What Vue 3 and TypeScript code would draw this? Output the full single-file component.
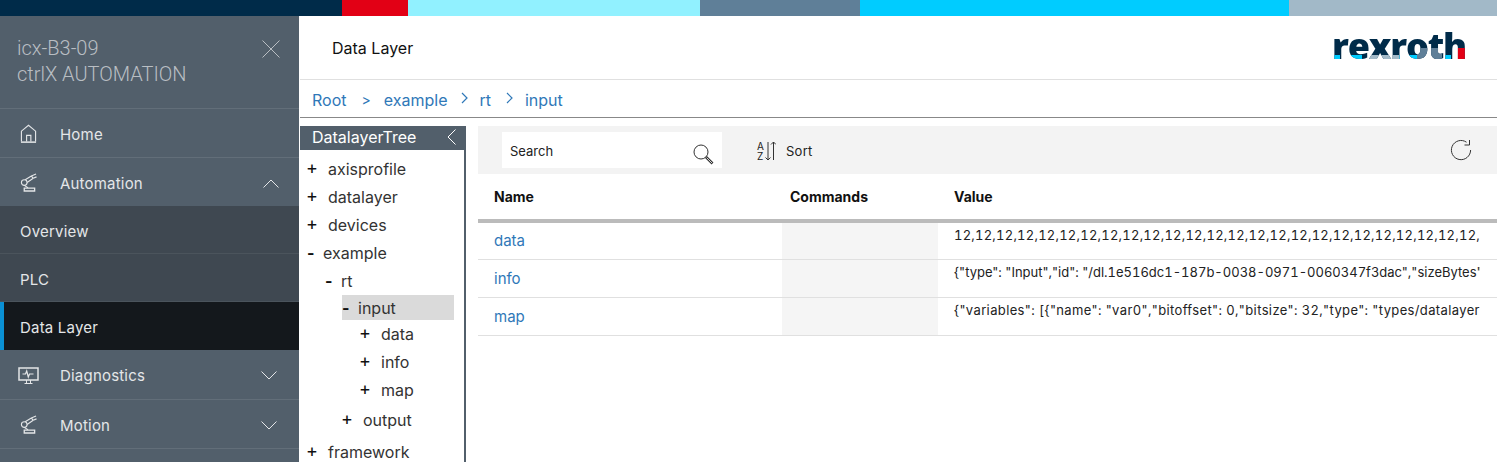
<template>
  <div class="app">
    <div class="brand-bar">
      <span v-for="seg in brandSegments" :key="seg.color" :style="{ width: seg.width + 'px', background: seg.color }"></span>
    </div>

    <div class="shell">
      <aside class="sidebar">
        <header class="sidebar__head">
          <div class="sidebar__title">icx-B3-09<br />ctrlX AUTOMATION</div>
          <svg class="sidebar__close" viewBox="0 0 18 18" fill="none" stroke="currentColor" stroke-width="1">
            <path d="M0.5 0.5l17 17M17.5 0.5l-17 17"></path>
          </svg>
        </header>

        <nav class="nav">
          <a class="nav__item">
            <svg class="nav__icon" viewBox="0 0 18 20" fill="none" stroke="currentColor" stroke-width="1.200">
              <path d="M1.500 18V7L9 0.800 16.500 7V18"></path>
              <path d="M7 18v-6.500h4.500V18"></path>
              <path d="M1 18.600h16" stroke-width="1.600"></path>
            </svg>
            <span>Home</span>
          </a>
          <a class="nav__item nav__item--open">
            <svg class="nav__icon" viewBox="0 0 18 20" fill="none" stroke="currentColor" stroke-width="1.200">
              <circle cx="4.500" cy="9.500" r="3"></circle>
              <path d="M5.500 6.500L12 2.500M7.500 9.500L14 5M12 2.500l2 2.500"></path>
              <path d="M12 2.500L17 0.500M14 5l3.500-1.500"></path>
              <path d="M4.500 12.500l4 2.500"></path>
              <path d="M4.500 15.500h11v3h-11z" stroke-width="1.400"></path>
            </svg>
            <span>Automation</span>
            <svg class="nav__chev nav__chev--up" viewBox="0 0 16 9" fill="none" stroke="currentColor">
              <path d="M0.500 8.500L8 1l7.500 7.500"></path>
            </svg>
          </a>

          <a class="nav__sub">Overview</a>
          <a class="nav__sub">PLC</a>
          <a class="nav__sub nav__sub--active">Data Layer</a>

          <a class="nav__item nav__item--diag">
            <svg class="nav__icon nav__icon--wide" viewBox="0 0 21 18" fill="none" stroke="currentColor">
              <path d="M1 1h19v12H1z" stroke-width="1.500"></path>
              <path d="M4.500 7h3l1.200-3 1.600 6 1.200-3h4" stroke-width="1.200"></path>
              <path d="M8.500 13v3M12.500 13v3M6.500 16.500h8"></path>
            </svg>
            <span>Diagnostics</span>
            <svg class="nav__chev" viewBox="0 0 16 9" fill="none" stroke="currentColor">
              <path d="M0.500 0.500L8 8l7.500-7.500"></path>
            </svg>
          </a>
          <a class="nav__item">
            <svg class="nav__icon" viewBox="0 0 18 20" fill="none" stroke="currentColor" stroke-width="1.200">
              <circle cx="4.500" cy="9.500" r="3"></circle>
              <path d="M5.500 6.500L12 2.500M7.500 9.500L14 5M12 2.500l2 2.500"></path>
              <path d="M12 2.500L17 0.500M14 5l3.500-1.500"></path>
              <path d="M4.500 12.500l4 2.500"></path>
              <path d="M4.500 15.500h11v3h-11z" stroke-width="1.400"></path>
            </svg>
            <span>Motion</span>
            <svg class="nav__chev" viewBox="0 0 16 9" fill="none" stroke="currentColor">
              <path d="M0.500 0.500L8 8l7.500-7.500"></path>
            </svg>
          </a>
        </nav>
      </aside>

      <main class="main">
        <header class="topbar">
          <h1 class="topbar__title">Data Layer</h1>
          <div class="logo">rexroth</div>
        </header>

        <div class="crumbs">
          <a>Root</a>
          <span class="crumbs__gt">&gt;</span>
          <a>example</a>
          <svg class="crumbs__sep crumbs__sep--first" viewBox="0 0 7 12" fill="none" stroke="currentColor" stroke-width="1.200"><path d="M1 1l5 5-5 5"></path></svg>
          <a>rt</a>
          <svg class="crumbs__sep crumbs__sep--second" viewBox="0 0 7 12" fill="none" stroke="currentColor" stroke-width="1.200"><path d="M1 1l5 5-5 5"></path></svg>
          <a>input</a>
        </div>

        <div class="content">
          <section class="tree">
            <div class="tree__head">
              <span>DatalayerTree</span>
              <svg viewBox="0 0 9 16" fill="none" stroke="currentColor"><path d="M8.500 0.500L1 8l7.500 7.500"></path></svg>
            </div>
            <ul class="tree__list">
              <li
                v-for="node in treeNodes"
                :key="node.label"
                class="tree__row"
                :class="[node.cls, { 'tree__row--open': node.open }]"
              >
                <span class="tree__mark">{{ node.open ? '-' : '+' }}</span>
                <span>{{ node.label }}</span>
              </li>
            </ul>
          </section>

          <section class="panel">
            <div class="toolbar">
              <div class="search">
                <span>Search</span>
                <svg viewBox="0 0 21 21" fill="none" stroke="#333">
                  <circle cx="8" cy="8" r="7"></circle>
                  <path d="M13 13l6.500 6.500" stroke-width="2.600"></path>
                  <path d="M13.600 13.600l5.400 5.400" stroke="#fff" stroke-width="0.800"></path>
                </svg>
              </div>
              <div class="sort">
                <span class="sort__az">A<br />Z</span>
                <svg viewBox="0 0 11 20" fill="none" stroke="#333"><path d="M3 1v18M0.500 16.500L3 19l2.500-2.500M8.500 19V1M6 3.500L8.500 1 11 3.500"></path></svg>
                <span class="sort__label">Sort</span>
              </div>
              <svg class="refresh" viewBox="0 0 22 22" fill="none" stroke="#333">
                <path d="M16.500 3.200A9.600 9.600 0 1 0 20.600 11"></path>
                <path d="M19.500 1v5h-5"></path>
              </svg>
            </div>

            <div class="table">
              <div class="table__row table__row--head">
                <div class="cell cell--name">Name</div>
                <div class="cell cell--cmd">Commands</div>
                <div class="cell cell--value">Value</div>
              </div>
              <div v-for="row in rows" :key="row.name" class="table__row">
                <div class="cell cell--name"><a>{{ row.name }}</a></div>
                <div class="cell cell--cmd"></div>
                <div class="cell cell--value" :class="'value-' + row.name">{{ row.value }}</div>
              </div>
            </div>
          </section>
        </div>
      </main>
    </div>
  </div>
</template>

<script setup lang="ts">
const brandSegments = [
  { width: 342, color: '#002b49' },
  { width: 66, color: '#e20015' },
  { width: 292, color: '#91f1ff' },
  { width: 160, color: '#5f7f98' },
  { width: 429, color: '#00ccff' },
  { width: 208, color: '#a2b9c8' },
];

const treeNodes = [
  { label: 'axisprofile', cls: 'd0', open: false },
  { label: 'datalayer', cls: 'd0', open: false },
  { label: 'devices', cls: 'd0', open: false },
  { label: 'example', cls: 'd0', open: true },
  { label: 'rt', cls: 'd1', open: true },
  { label: 'input', cls: 'd2 selected', open: true },
  { label: 'data', cls: 'd3', open: false },
  { label: 'info', cls: 'd3', open: false },
  { label: 'map', cls: 'd3', open: false },
  { label: 'output', cls: 'd2 gap', open: false },
  { label: 'framework', cls: 'd0 gap', open: false },
];

// values run past the column in the real table and are clipped there
const rows = [
  { name: 'data', value: '12,'.repeat(25) },
  {
    name: 'info',
    value: '{"type": "Input","id": "/dl.1e516dc1-187b-0038-0971-0060347f3dac","sizeBytes"',
  },
  {
    name: 'map',
    value: '{"variables": [{"name": "var0","bitoffset": 0,"bitsize": 32,"type": "types/datalayer',
  },
];
</script>

<style>
html,
body {
  margin: 0;
  height: 100%;
  overflow: hidden;
  background: #fff;
}
</style>

<style scoped>
.app {
  height: 462px;
  overflow: hidden;
  font-family: Inter, Roboto, "Liberation Sans", sans-serif;
  color: #222;
}

.brand-bar {
  display: flex;
  height: 16px;
}

.shell {
  display: flex;
  height: 446px;
}

.sidebar {
  flex: 0 0 299px;
  margin-right: 1px;
  background: #525f6b;
  color: #e4e6e8;
}

.sidebar__head {
  display: flex;
  justify-content: space-between;
  height: 93px;
  box-sizing: border-box;
  padding: 19px 19px 0 17px;
  border-bottom: 1px solid #626e79;
  color: #b9bec3;
}

.sidebar__title {
  font-family: Roboto, sans-serif;
  font-size: 20px;
  font-weight: 300;
  line-height: 26px;
}

.sidebar__close {
  width: 18px;
  height: 18px;
  margin-top: 5px;
}

.nav__item {
  display: flex;
  align-items: center;
  height: 49px;
  box-sizing: border-box;
  padding: 2px 22px 0 20px;
  border-bottom: 1px solid #626e79;
  font-size: 15px;
  letter-spacing: 0.2px;
}

.nav__item--open {
  height: 48px;
  border-bottom: 0;
}

.nav__item--diag {
  height: 50px;
}

.nav__item span {
  flex: 1;
}

.nav__icon {
  width: 17px;
  height: 20px;
  margin-right: 23px;
}

.nav__icon--wide {
  width: 21px;
  height: 18px;
  margin-left: -2px;
  margin-right: 21px;
}

.nav__chev {
  width: 16px;
  height: 9px;
}

.nav__chev--up {
  margin-right: -2px;
}

.nav__sub {
  display: flex;
  align-items: center;
  height: 48px;
  box-sizing: border-box;
  padding: 3px 0 0 20px;
  background: #3f4851;
  border-bottom: 1px solid #4b545c;
  font-size: 15px;
  letter-spacing: 0.2px;
}

.nav__sub--active {
  background: #14181c;
  border-bottom: 0;
  border-left: 4px solid #0a90d4;
  padding: 2px 0 0 16px;
}

.main {
  flex: 1;
  min-width: 0;
  display: flex;
  flex-direction: column;
}

.topbar {
  display: flex;
  align-items: center;
  justify-content: space-between;
  height: 64px;
  box-sizing: border-box;
  padding: 1px 31px 0 32px;
  border-bottom: 1px solid #e0e0e0;
}

.topbar__title {
  margin: 0;
  font-size: 16px;
  font-weight: 400;
  color: #111;
}

.logo {
  position: relative;
  top: -2px;
  font-family: "Open Sans", sans-serif;
  font-size: 36px;
  font-weight: 800;
  line-height: 36px;
  letter-spacing: -1.2px;
  color: transparent;
  background:
    linear-gradient(90deg, #00ccff 0 8px, transparent 8px 15px, #00ccff 15px 30px, transparent 30px 35px, #a2b9c8 35px 67px, #00ccff 67px 85px, transparent 85px 112px, #00ccff 112px 119px, transparent 119px) left 0 top 27px / 100% 9px no-repeat,
    linear-gradient(90deg, transparent 0 85px, #5f7f98 85px 110px, transparent 110px 125px, #e20015 125px) left 0 top 20px / 100% 16px no-repeat,
    #002b49;
  -webkit-background-clip: text;
  background-clip: text;
}

.crumbs {
  display: flex;
  align-items: center;
  height: 38px;
  box-sizing: border-box;
  padding: 2px 0 0 12px;
  border-bottom: 1px solid #888;
  color: #2f78b8;
  font-size: 16px;
}

.crumbs__gt {
  margin: 0 13px 0 15px;
  font-size: 14px;
}

.crumbs__sep {
  width: 7px;
  height: 12px;
  margin: -3px 12px 0 14px;
}

.crumbs__sep--first {
  margin-right: 11px;
}

.crumbs__sep--second {
  margin-left: 15px;
}

.content {
  flex: 1;
  display: flex;
  min-height: 0;
  padding-top: 8px;
}

.tree {
  flex: 0 0 164px;
  box-sizing: content-box;
  border-right: 2px solid #525f6b;
}

.tree__head {
  display: flex;
  align-items: center;
  justify-content: space-between;
  height: 24px;
  box-sizing: border-box;
  padding: 0 0 2px 12px;
  margin-right: -2px;
  background: #525f6b;
  color: #fff;
  font-size: 16px;
}

.tree__head svg {
  width: 9px;
  height: 16px;
  margin-right: 10px;
}

.tree__list {
  list-style: none;
  margin: 0;
  padding: 5px 0 0;
  font-size: 16px;
  color: #333;
}

.tree__row {
  display: flex;
  align-items: center;
  height: 28px;
}

.tree__mark {
  color: #111;
  width: 22px;
  font-size: 18px;
  line-height: 1;
  margin-top: -2px;
}

.tree__row--open .tree__mark {
  width: 16px;
  font-size: 16px;
  font-weight: 700;
  margin-top: 0;
}

.d0 {
  padding-left: 6px;
}

.d1 {
  padding-left: 25px;
}

.d2 {
  padding-left: 41px;
}

.d3 {
  padding-left: 59px;
}

.selected {
  height: 25px;
  margin: 0 10px 0 42px;
  padding-left: 0;
  background: #dadada;
}

.gap {
  height: 32px;
}

.tree__row--open.d0 {
  padding-left: 7px;
}

.panel {
  flex: 1;
  min-width: 0;
  margin-left: 12px;
}

.toolbar {
  display: flex;
  align-items: center;
  height: 48px;
  padding: 0 25px 0 24px;
  background: #f3f3f3;
}

.search {
  display: flex;
  align-items: center;
  justify-content: space-between;
  width: 220px;
  height: 36px;
  box-sizing: border-box;
  padding: 1px 8px 0;
  background: #fff;
  font-size: 13px;
}

.search svg {
  width: 21px;
  height: 21px;
  margin-top: 7px;
}

.sort {
  display: flex;
  align-items: center;
  margin-left: 35px;
  padding-top: 1px;
  flex: 1;
  font-size: 13px;
}

.sort__az {
  font-size: 10px;
  line-height: 10px;
}

.sort svg {
  width: 11px;
  height: 20px;
  margin-left: 1px;
}

.sort__label {
  margin-left: 10px;
  letter-spacing: 0.3px;
}

.refresh {
  width: 22px;
  height: 22px;
}

.table__row {
  display: grid;
  grid-template-columns: 304px 156px 1fr;
  height: 38px;
  box-sizing: border-box;
  border-bottom: 1px solid #e0e0e0;
  font-size: 13px;
}

.table__row--head {
  height: 49px;
  border-bottom: 4px solid #bbb;
  font-size: 14px;
  font-weight: 700;
  color: #111;
}

.table__row--head + .table__row {
  height: 37px;
}

.table__row--head + .table__row .cell--name {
  padding-bottom: 1px;
}

.cell {
  display: flex;
  align-items: center;
  min-width: 0;
}

.cell--name {
  padding-left: 16px;
  color: #2f78b8;
  font-size: 15px;
}

.table__row--head .cell--name {
  color: #111;
  font-size: 14px;
}

.cell--cmd {
  padding-left: 8px;
  background: #f5f5f5;
}

.table__row--head .cell--cmd {
  background: none;
}

.cell--value {
  display: block;
  margin-right: 17px;
  padding: 4px 0 0 16px;
  overflow: hidden;
  white-space: nowrap;
  color: #222;
  font-variant-numeric: tabular-nums;
}

.value-data {
  letter-spacing: 0.23px;
}

.value-map {
  letter-spacing: 0.37px;
}

.table__row--head .cell--value {
  display: flex;
  padding-top: 0;
  color: #111;
}
</style>
